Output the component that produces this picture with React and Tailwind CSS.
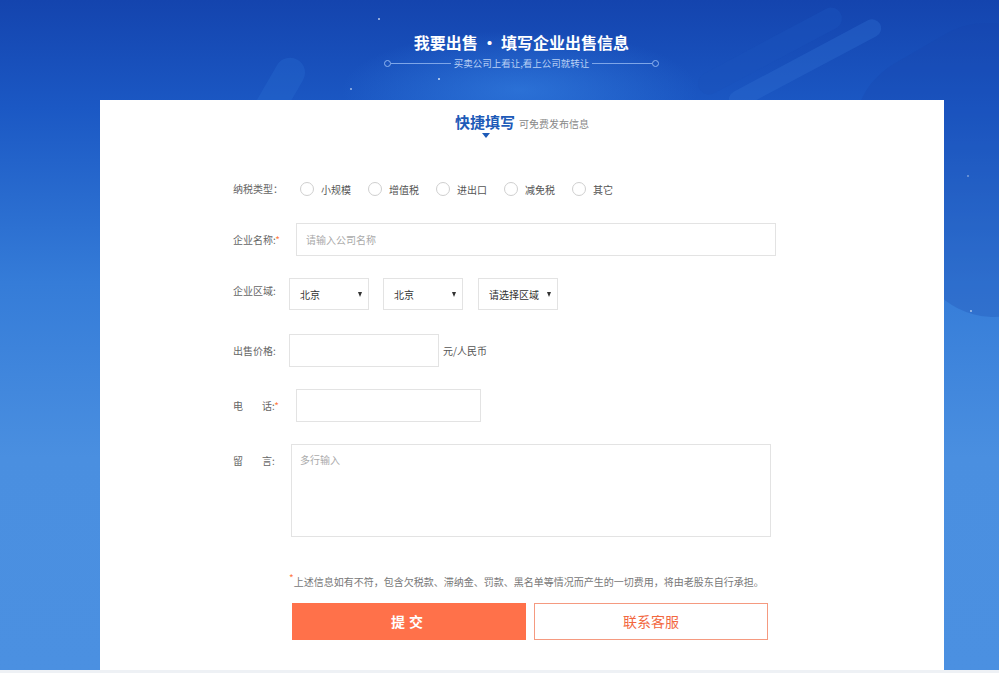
import { useState } from "react";

const taxTypes = ["小规模", "增值税", "进出口", "减免税", "其它"];

function Label({ children, star }) {
  return (
    <div className="w-[56px] shrink-0 text-[10px] leading-[14px] text-[#666]">
      {children}
      {star && <span className="text-[#ff7a45]">*</span>}
    </div>
  );
}

function Select({ value, width }) {
  return (
    <div
      className={`flex h-[32px] items-center justify-between border border-[#e3e3e3] bg-white pl-[10px] pr-[6px] text-[10px] text-[#333] ${width}`}
    >
      <span>{value}</span>
      <span className="h-0 w-0 border-l-[2.5px] border-r-[2.5px] border-t-[5px] border-l-transparent border-r-transparent border-t-[#333]" />
    </div>
  );
}

export default function App() {
  const [tax, setTax] = useState(null);

  return (
    <div
      className="relative h-[673px] w-full overflow-hidden bg-[linear-gradient(180deg,#1444ae_0%,#1b58c4_16%,#357cd8_42%,#4a8fe0_68%,#4b90e1_100%)]"
      style={{ fontFamily: '"Noto Sans CJK SC", "Noto Sans", sans-serif' }}
    >
      {/* background decoration */}
      <div className="pointer-events-none absolute left-[340px] top-[30px] h-[120px] w-[360px] rounded-full bg-[radial-gradient(ellipse_at_center,rgba(60,140,235,0.5),rgba(60,140,235,0)_70%)]" />
      <div className="pointer-events-none absolute left-[690px] top-[40px] h-[22px] w-[160px] -rotate-[28deg] rounded-full bg-[#1a52bb] opacity-50" />
      <div className="pointer-events-none absolute left-[720px] top-[55px] h-[18px] w-[170px] -rotate-[28deg] rounded-full bg-[#2c6bd0] opacity-40" />
      <div className="pointer-events-none absolute left-[880px] top-[30px] h-[280px] w-[220px] -rotate-[30deg] rounded-[80px] bg-[#1645ad] opacity-25" />
      <div className="pointer-events-none absolute left-[265px] top-[55px] h-[70px] w-[30px] rotate-[30deg] rounded-full bg-[#2a6fd4] opacity-30" />
      <div className="pointer-events-none absolute left-[378px] top-[18px] h-[2px] w-[2px] rounded-full bg-white opacity-70" />
      <div className="pointer-events-none absolute left-[438px] top-[78px] h-[2px] w-[2px] rounded-full bg-white opacity-80" />
      <div className="pointer-events-none absolute left-[350px] top-[88px] h-[2px] w-[2px] rounded-full bg-white opacity-60" />
      <div className="pointer-events-none absolute left-[970px] top-[310px] h-[2px] w-[2px] rounded-full bg-white opacity-60" />
      <div className="pointer-events-none absolute left-[967px] top-[175px] h-[2px] w-[2px] rounded-full bg-white opacity-40" />

      {/* header */}
      <div className="relative flex h-[100px] flex-col items-center pl-[44px] pt-[30px]">
        <h1 className="text-[16px] font-bold leading-[24px] text-white">
          我要出售 · 填写企业出售信息
        </h1>
        <div className="mt-[2px] flex items-center">
          <span className="h-[7px] w-[7px] rounded-full border border-[#8fb4ef]" />
          <span className="h-px w-[60px] bg-[#7ea6e8]" />
          <span className="px-[3px] text-[9.5px] leading-[14px] text-[#b9d0f5]">
            买卖公司上看让,看上公司就转让
          </span>
          <span className="h-px w-[60px] bg-[#7ea6e8]" />
          <span className="h-[7px] w-[7px] rounded-full border border-[#8fb4ef]" />
        </div>
      </div>

      {/* card */}
      <div className="relative mx-[100px] h-[570px] w-[844px] bg-white pt-[12px]">
        <div className="flex flex-col items-center">
          <div className="flex items-end">
            <span className="text-[15px] font-bold leading-[20px] text-[#1e5bb8]">快捷填写</span>
            <span className="ml-[4px] pb-[1px] text-[10px] leading-[14px] text-[#888]">可免费发布信息</span>
          </div>
          <div className="ml-[-72px] mt-[1px] h-0 w-0 border-l-[4px] border-r-[4px] border-t-[5px] border-l-transparent border-r-transparent border-t-[#1e5bb8]" />
        </div>

        <div className="pl-[133px] pt-[41px]">
          {/* tax type */}
          <div className="flex h-[20px] items-center">
            <Label>纳税类型：</Label>
            <div className="ml-[11px] flex items-center">
              {taxTypes.map((t) => (
                <label
                  key={t}
                  className="flex w-[68px] cursor-pointer items-center text-[10px] text-[#555]"
                  onClick={() => setTax(t)}
                >
                  <span className="flex h-[14px] w-[14px] items-center justify-center rounded-full border border-[#cfcfcf] bg-white">
                    {tax === t && <span className="h-[6px] w-[6px] rounded-full bg-[#1e5bb8]" />}
                  </span>
                  <span className="ml-[7px]">{t}</span>
                </label>
              ))}
            </div>
          </div>

          {/* company name */}
          <div className="mt-[24px] flex items-center">
            <Label star>企业名称:</Label>
            <input
              className="ml-[7px] h-[33px] w-[480px] border border-[#e3e3e3] px-[9px] text-[10px] outline-none placeholder:text-[#aaa]"
              placeholder="请输入公司名称"
            />
          </div>

          {/* region */}
          <div className="mt-[22px] flex items-center">
            <div className="-mt-[6px]">
              <Label>企业区域:</Label>
            </div>
            <div className="flex gap-[14px]">
              <Select value="北京" width="w-[80px]" />
              <Select value="北京" width="w-[80px]" />
              <div className="ml-[1px]">
                <Select value="请选择区域" width="w-[80px]" />
              </div>
            </div>
          </div>

          {/* price */}
          <div className="mt-[24px] flex items-center">
            <Label>出售价格:</Label>
            <input className="h-[33px] w-[150px] border border-[#e3e3e3] px-[9px] text-[10px] outline-none" />
            <span className="ml-[4px] text-[10px] text-[#555]">元/人民币</span>
          </div>

          {/* phone */}
          <div className="mt-[22px] flex items-center">
            <Label star>
              电<span className="inline-block w-[19px]" />话:
            </Label>
            <input className="ml-[7px] h-[33px] w-[185px] border border-[#e3e3e3] px-[9px] text-[10px] outline-none" />
          </div>

          {/* message */}
          <div className="mt-[22px] flex items-start">
            <div className="pt-[10px]">
              <Label>
                留<span className="inline-block w-[19px]" />言:
              </Label>
            </div>
            <textarea
              className="ml-[2px] h-[93px] w-[480px] resize-none border border-[#e3e3e3] px-[8px] py-[7px] text-[10px] outline-none placeholder:text-[#aaa]"
              placeholder="多行输入"
            />
          </div>

          {/* note */}
          <div className="mt-[38px] pl-[56px] text-[10px] leading-[14px] text-[#777]">
            <span className="relative -top-[4px] text-[#ff7a45]">*</span>
            上述信息如有不符，包含欠税款、滞纳金、罚款、黑名单等情况而产生的一切费用，将由老股东自行承担。
          </div>

          {/* buttons */}
          <div className="mt-[14px] flex gap-[8px] pl-[59px]">
            <button className="h-[37px] w-[234px] bg-[#ff714a] text-[14px] font-bold tracking-[4px] text-white">
              提交
            </button>
            <button className="h-[37px] w-[234px] border border-[#f59a80] bg-white text-[14px] text-[#f2683f]">
              联系客服
            </button>
          </div>
        </div>
      </div>
      <div className="h-[3px] bg-[#eef1f5]" />
    </div>
  );
}
